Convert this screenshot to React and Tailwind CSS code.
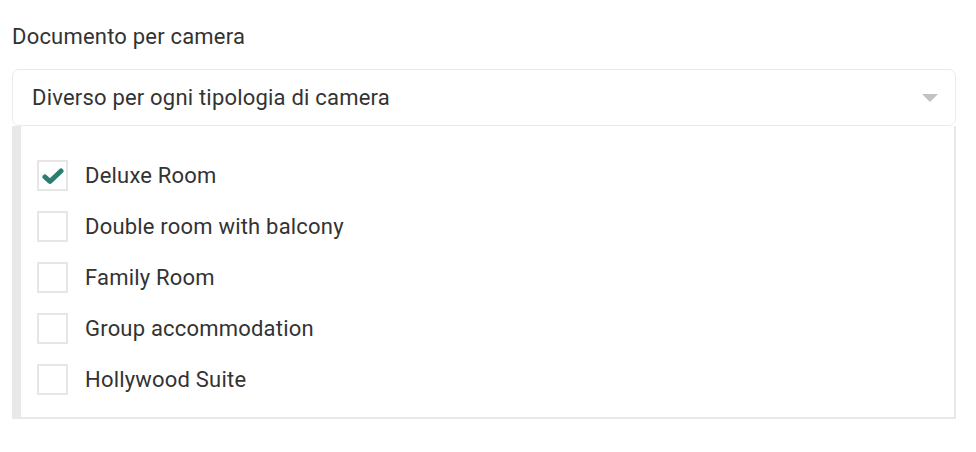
import { useState } from 'react'

const rooms = [
  'Deluxe Room',
  'Double room with balcony',
  'Family Room',
  'Group accommodation',
  'Hollywood Suite',
]

function Checkbox({ checked, onClick }) {
  return (
    <button
      onClick={onClick}
      className="w-[31px] h-[31px] border-2 border-[#e6e6e6] bg-white flex items-center justify-center shrink-0"
    >
      {checked && (
        <svg width="22" height="18" viewBox="0 0 22 18">
          <path d="M3 10 L8 14.5 L19 4" fill="none" stroke="#2b7d70" strokeWidth="5" strokeLinecap="round" strokeLinejoin="round" />
        </svg>
      )}
    </button>
  )
}

export default function App() {
  const [selected, setSelected] = useState(['Deluxe Room'])

  const toggle = (r) =>
    setSelected((s) => (s.includes(r) ? s.filter((x) => x !== r) : [...s, r]))

  return (
    <div className="w-[976px] h-[452px] bg-white px-3 pt-[23px] text-[#333] tracking-[0.2px]" style={{ fontFamily: 'Roboto, "Liberation Sans", sans-serif' }}>
      <div className="text-[22px] leading-[28px] text-[#333]">Documento per camera</div>

      <div className="mt-[18px] w-[944px] h-[57px] border border-[#ebebeb] rounded-[7px] flex items-center justify-between pl-[19px] pr-[17px]">
        <span className="text-[22px] text-[#333]">Diverso per ogni tipologia di camera</span>
        <svg width="16" height="8" viewBox="0 0 16 8">
          <path d="M0 0 H16 L8 8 Z" fill="#c2c2c2" />
        </svg>
      </div>

      <div className="w-[944px] border-l-[9px] border-r-2 border-b-2 border-[#e8e8e8] pt-[34px] pb-[22px] pl-[16px] flex flex-col gap-[20px]">
        {rooms.map((r) => (
          <label key={r} className="flex items-center gap-[17px] h-[31px] cursor-pointer">
            <Checkbox checked={selected.includes(r)} onClick={() => toggle(r)} />
            <span className="text-[22px] text-[#333]">{r}</span>
          </label>
        ))}
      </div>
    </div>
  )
}
